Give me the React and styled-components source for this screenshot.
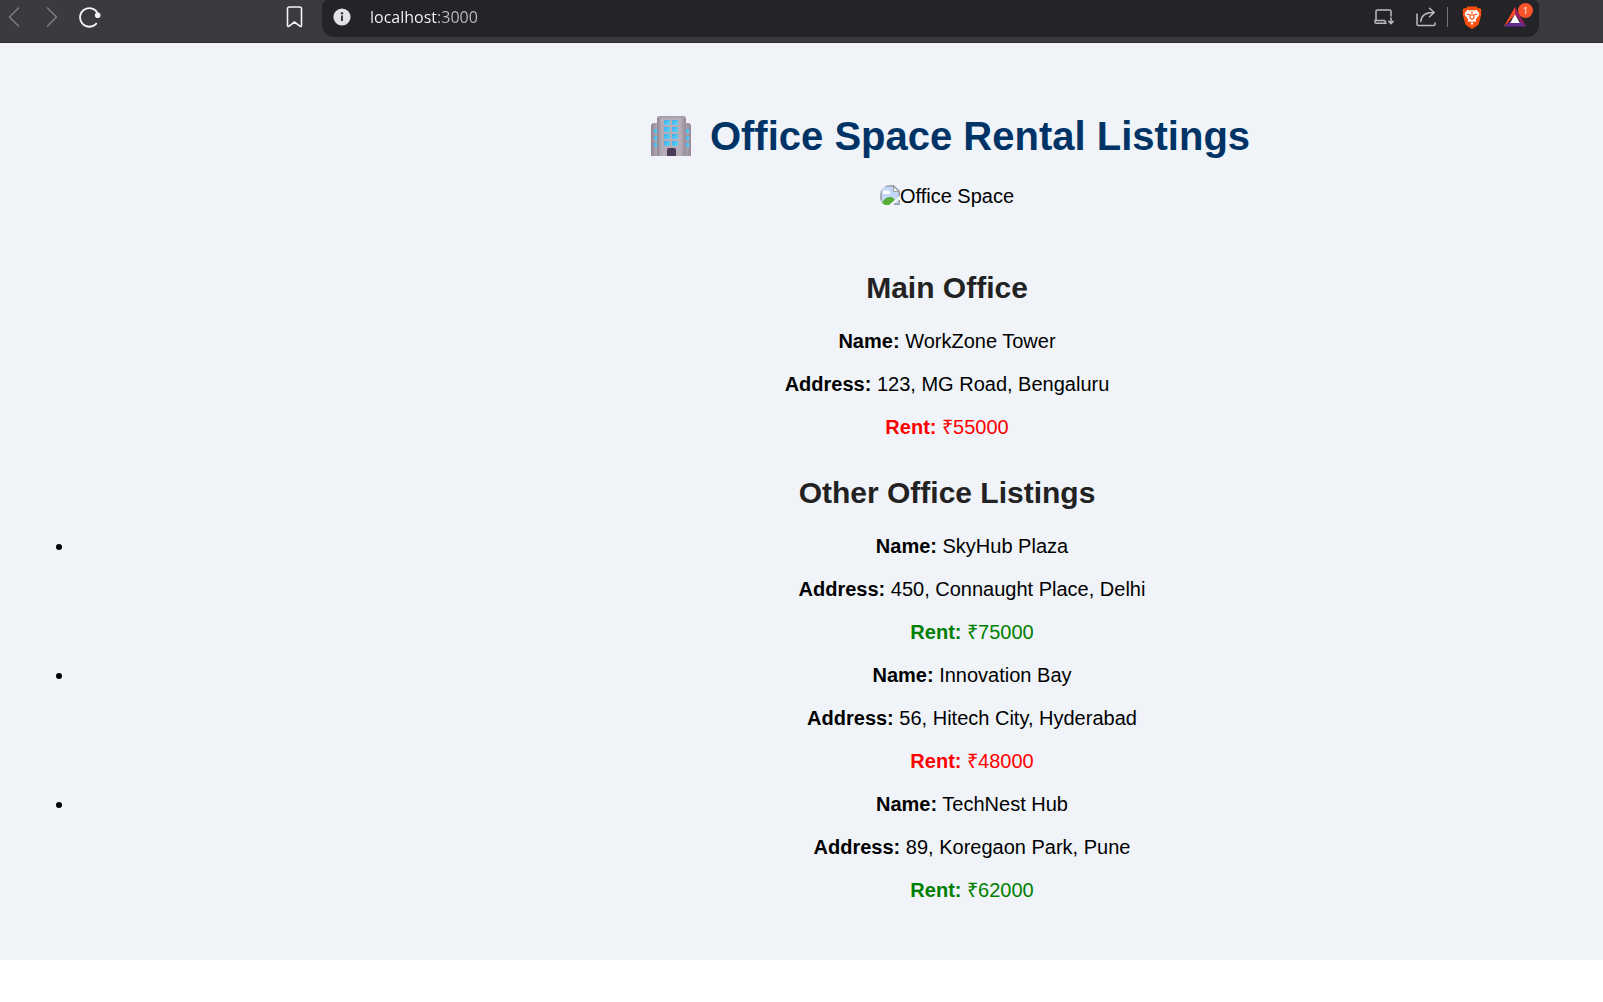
import React from "react";
import styled, { createGlobalStyle } from "styled-components";

const GlobalStyle = createGlobalStyle`
  *, *::before, *::after { box-sizing: border-box; }
  body {
    margin: 0;
    background: #ffffff;
    color: #000000;
    font-family: "Liberation Sans", Arial, sans-serif;
    font-size: 20px;
    line-height: 23px;
  }
`;

const Window = styled.div`
  overflow-x: hidden;
`;

const Toolbar = styled.header`
  display: flex;
  align-items: flex-start;
  height: 43px;
  padding-right: 64px;
  background: #3b3a3f;
  border-bottom: 1px solid #2f2a33;
`;

const NavGroup = styled.nav`
  display: flex;
  flex: none;
  width: 322px;
  padding: 0 14px 0 0;
`;

const IconButton = styled.button`
  display: flex;
  flex: none;
  align-items: center;
  justify-content: center;
  width: ${(p) => p.$width || 38}px;
  height: 34px;
  margin: 0;
  margin-left: ${(p) => (p.$push ? "auto" : "0")};
  padding: 0;
  border: 0;
  background: none;
  color: ${(p) => p.$color || "#f4f2f6"};
  cursor: pointer;
`;

const AddressBar = styled.form`
  display: flex;
  flex: 1;
  min-width: 0;
  height: 37px;
  padding-right: 5px;
  border-radius: 6px 6px 12px 12px;
  background: #242328;
`;

const AddressInput = styled.input`
  flex: 1;
  min-width: 0;
  height: 34px;
  margin: 0;
  padding: 0 0 0 8px;
  border: 0;
  outline: 0;
  color: #f6f6f8;
  background: linear-gradient(90deg, #fbfbfd 76px, #bdbcc2 76px);
  background-clip: text;
  -webkit-text-fill-color: transparent;
  font: 16px/24px "Open Sans", "Noto Sans", sans-serif;
`;

const Divider = styled.span`
  flex: none;
  width: 1px;
  height: 20px;
  margin-top: 7px;
  background: #77767c;
`;

const RewardsButton = styled(IconButton)`
  position: relative;
`;

const Badge = styled.span`
  position: absolute;
  top: 3px;
  right: 1px;
  width: 15px;
  height: 15px;
  border-radius: 8px;
  background: #fb542b;
  color: #ffffff;
  font: 9px/15px "Open Sans", sans-serif;
  text-align: center;
`;

/* The page is laid out wider than the window and runs out past its right edge. */
const Page = styled.main`
  margin-right: -291px;
  padding: 38px 25px;
  background: #f0f4f9;
  text-align: center;
`;

const Title = styled.h1`
  display: flex;
  align-items: center;
  justify-content: center;
  gap: 19px;
  margin: 32px 0 26px;
  padding-left: 7px;
  color: #003366;
  font-size: 40px;
  line-height: 46px;
`;

const Picture = styled.figure`
  display: flex;
  justify-content: center;
  margin: 0 0 63px;
`;

const Heading = styled.h2`
  margin: 0 0 25px;
  color: #222222;
  font-size: 30px;
  line-height: 34px;
`;

const MainOffice = styled.section`
  margin-bottom: 37px;
`;

const OfficeList = styled.ul`
  margin: 0;
  padding-left: 50px;
  list-style: disc;
`;

const OfficeItem = styled.li`
  margin-bottom: 20px;
`;

const Line = styled.p`
  margin: 0 0 20px;
  color: ${(p) => p.$color || "inherit"};

  &:last-child { margin-bottom: 0; }
`;

const mainOffice = { name: "WorkZone Tower", address: "123, MG Road, Bengaluru", rent: 55000 };

const otherOffices = [
  { name: "SkyHub Plaza", address: "450, Connaught Place, Delhi", rent: 75000 },
  { name: "Innovation Bay", address: "56, Hitech City, Hyderabad", rent: 48000 },
  { name: "TechNest Hub", address: "89, Koregaon Park, Pune", rent: 62000 },
];

function OfficeDetails({ office }) {
  return (
    <>
      <Line><strong>Name:</strong> {office.name}</Line>
      <Line><strong>Address:</strong> {office.address}</Line>
      <Line $color={office.rent < 60000 ? "red" : "green"}>
        <strong>Rent:</strong> ₹{office.rent}
      </Line>
    </>
  );
}

const stroke = { fill: "none", stroke: "currentColor", strokeLinecap: "round", strokeLinejoin: "round" };

function BackIcon() {
  return (
    <svg width="12" height="20" viewBox="0 0 12 20" {...stroke} strokeWidth="1.5">
      <path d="M10.5 1 1.500 10l9 9" />
    </svg>
  );
}

function ForwardIcon() {
  return (
    <svg width="12" height="20" viewBox="0 0 12 20" {...stroke} strokeWidth="1.5">
      <path d="m1.500 1 9 9-9 9" />
    </svg>
  );
}

function ReloadIcon() {
  return (
    <svg width="22" height="22" viewBox="0 0 22 22" {...stroke} strokeWidth="1.8">
      <path d="M17.300 17.600A9.300 9.300 0 1 1 18.500 7" />
      <circle cx="18.700" cy="9.300" r="2.800" fill="currentColor" stroke="none" />
    </svg>
  );
}

function BookmarkIcon() {
  return (
    <svg width="17" height="22" viewBox="0 0 17 22" {...stroke} strokeWidth="1.6">
      <path d="M3.200 1h10.600c1 0 1.700.7 1.700 1.700v16.800c0 1-.9 1.300-1.600.7L8.500 16l-5.400 4.200c-.7.6-1.600.3-1.600-.7V2.700C1.500 1.700 2.200 1 3.200 1Z" />
    </svg>
  );
}

function InfoIcon() {
  return (
    <svg width="18" height="18" viewBox="0 0 18 18">
      <circle cx="9" cy="9" r="8.600" fill="#e4e1e8" />
      <path d="M9 7.500v5.500" fill="none" stroke="#3b3a3f" strokeWidth="2" />
      <circle cx="9" cy="5.300" r="1.200" fill="#3b3a3f" />
    </svg>
  );
}

function InstallIcon() {
  return (
    <svg width="20" height="16" viewBox="0 0 20 16" {...stroke} strokeWidth="1.500">
      <path d="M17 7V2.200c0-.8-.4-1.200-1.200-1.200H3.200C2.400 1 2 1.400 2 2.200V11M1 11.500h9.500l1 1.500M1 11.500V13c0 .8.400 1.200 1.200 1.200H12M17 9v5.500m-2.300-2.200L17 14.600l2.300-2.300" />
    </svg>
  );
}

function ShareIcon() {
  return (
    <svg width="20" height="20" viewBox="0 0 20 20" {...stroke} strokeWidth="1.500">
      <path d="M1 7v10.200c0 .9.500 1.400 1.400 1.400h15.200c.9 0 1.400-.5 1.400-1.400V16" />
      <path d="M4.800 14.500C5.200 9 9 5.500 17.500 5.500M13.500 1.200l4.700 4.300-4.700 4.200" />
    </svg>
  );
}

function BraveIcon() {
  return (
    <svg width="20" height="23" viewBox="0 0 20 23">
      <path fill="#fb4f0b" d="M5.700.4h8.600l1.700 1.900 2.200-.1 1.300 2-.6 2 .5 1.500-2.500 9.800c-.3 1-1 1.800-1.800 2.300L10 23l-5.100-3.200a4 4 0 0 1-1.800-2.300L.600 7.700l.5-1.500-.6-2 1.300-2 2.200.1Z" />
      <path fill="#fff" d="m5.200 4 2.500.4 2.300-.5 2.300.5 2.500-.4 2.600 3.300-.7 2.500-2.900 3.500.3 1.600-.9 1.200-1.600-.8-1.600 1.200 1.600 1.100L10 19l-1.600-1.400L10 16.500l-1.600-1.200-1.600.8-.9-1.200.3-1.600-2.900-3.500-.7-2.500Z" />
      <path fill="none" stroke="#fb4f0b" strokeWidth="1.100" d="m4.800 8 3.600 1.100-.5 2.900L10 13.300l2.100-1.300-.5-2.900L15.200 8M10 5v5" />
    </svg>
  );
}

function RewardsIcon() {
  return (
    <svg width="24" height="20" viewBox="0 0 24 20">
      <path fill="#ff4724" d="M12 0v7.500L4.500 16 .8 19.500Z" />
      <path fill="#9e1f63" d="M12 0v7.500l6.500 8.500 4.700 3.500Z" />
      <path fill="#662d91" d="M.8 19.500 6.500 15h11l5.700 4.500Z" />
      <path fill="#fff" d="m12 7.300 4.800 8.700H7.200Z" />
    </svg>
  );
}

function BuildingIcon() {
  const centre = [4, 11, 18, 25];
  const sides = [13, 20, 27];
  return (
    <svg width="40" height="40" viewBox="0 0 40 40" role="img" aria-label="Office building">
      <defs>
        <linearGradient id="wall" x1="0" x2="1">
          <stop offset="0" stopColor="#8e8491" />
          <stop offset=".15" stopColor="#b5abb6" />
          <stop offset=".8" stopColor="#b8afb9" />
          <stop offset="1" stopColor="#948a98" />
        </linearGradient>
        <linearGradient id="glass" x1="0" x2="1" y2="1">
          <stop offset="0" stopColor="#3aafe9" />
          <stop offset="1" stopColor="#62d6ff" />
        </linearGradient>
      </defs>
      <path fill="url(#wall)" d="M0 10q0-3 3-3h34q3 0 3 3v30H0Z" />
      <path fill="url(#wall)" d="M6 3q0-3 3-3h23q3 0 3 3v37H6Z" />
      <path fill="#aaa0ad" d="M8 0h25l1 2H7Z" />
      {centre.map((y) => (
        <g key={y} fill="url(#glass)">
          <rect x="13" y={y} width="6" height="5" rx="1" />
          <rect x="21" y={y} width="6" height="5" rx="1" />
        </g>
      ))}
      {sides.map((y) => (
        <g key={y} fill="url(#glass)">
          <rect x="3" y={y} width="3" height="4" />
          <rect x="35" y={y} width="3" height="4" />
        </g>
      ))}
      <path fill="#4b3b54" d="M16 34q0-2 2-2h5q2 0 2 2v6h-9Z" />
    </svg>
  );
}

function BrokenImageIcon() {
  return (
    <svg width="20" height="20" viewBox="0 0 20 20" aria-hidden="true">
      <defs>
        <clipPath id="rounded">
          <path d="M10 0h10v20H5A10 10 0 0 1 0 10 10 10 0 0 1 10 0Z" />
        </clipPath>
      </defs>
      <g clipPath="url(#rounded)">
        <path fill="#c4d6f5" d="M0 0h14l5 5v15H0Z" />
        <path fill="#fff" d="M3 7c0-2 3-3 4-1 2-1 4 1 3 3H3Z" />
        <path fill="#58ad38" d="M1 20c2-5 5-8 9-8 3 0 4 2 5 3l-5 5Z" />
        <path fill="#eff3f8" d="m9 20 10.500-9v3L13 20Z" />
        <path fill="none" stroke="#9a9da2" strokeWidth="1.500" d="M1 20V1h12.500l5.700 5.500V11M19.200 15v4.300H14" />
        <path fill="#fff" stroke="#9a9da2" strokeWidth="1.200" d="M13.500 1v5.500h5.700Z" />
      </g>
    </svg>
  );
}

export default function App() {
  return (
    <>
      <GlobalStyle />
      <Window>
        <Toolbar>
          <NavGroup aria-label="Browser navigation">
            <IconButton type="button" aria-label="Back" $width={28} $color="#7f7d83"><BackIcon /></IconButton>
            <IconButton type="button" aria-label="Forward" $width={48} $color="#7f7d83"><ForwardIcon /></IconButton>
            <IconButton type="button" aria-label="Reload" $width={28}><ReloadIcon /></IconButton>
            <IconButton type="button" aria-label="Bookmark this page" $width={28} $push><BookmarkIcon /></IconButton>
          </NavGroup>
          <AddressBar onSubmit={(e) => e.preventDefault()}>
            <IconButton type="button" aria-label="Site information" $width={40}><InfoIcon /></IconButton>
            <AddressInput type="text" aria-label="Address" defaultValue="localhost:3000" spellCheck={false} />
            <IconButton type="button" aria-label="Install app" $width={42} $color="#bdbbc0"><InstallIcon /></IconButton>
            <IconButton type="button" aria-label="Share" $width={42} $color="#bdbbc0"><ShareIcon /></IconButton>
            <Divider />
            <IconButton type="button" aria-label="Brave Shields" $width={48}><BraveIcon /></IconButton>
            <RewardsButton type="button" aria-label="Brave Rewards"><RewardsIcon /><Badge>1</Badge></RewardsButton>
          </AddressBar>
        </Toolbar>
        <Page>
          <Title><BuildingIcon />Office Space Rental Listings</Title>
          <Picture><BrokenImageIcon />Office Space</Picture>
          <MainOffice>
            <Heading>Main Office</Heading>
            <OfficeDetails office={mainOffice} />
          </MainOffice>
          <section>
            <Heading>Other Office Listings</Heading>
            <OfficeList>
              {otherOffices.map((office) => (
                <OfficeItem key={office.name}><OfficeDetails office={office} /></OfficeItem>
              ))}
            </OfficeList>
          </section>
        </Page>
      </Window>
    </>
  );
}
